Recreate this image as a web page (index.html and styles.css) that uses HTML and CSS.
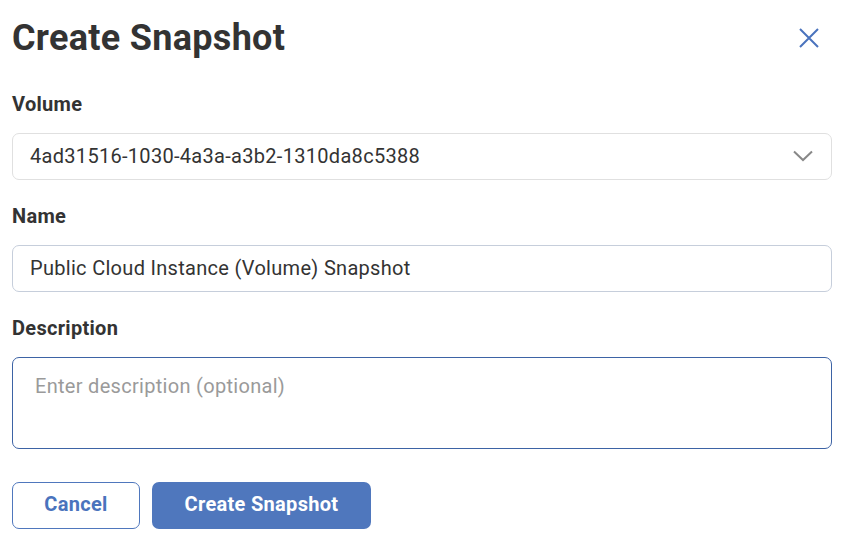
FILE: index.html
```html
<!DOCTYPE html>
<html lang="en">
<head>
    <meta charset="UTF-8">
    <meta name="viewport" content="width=device-width, initial-scale=1.0">
    <title>Create Snapshot</title>
    <link rel="stylesheet" href="styles.css">
</head>
<body>
    <div class="dialog">
        <div class="dialog-header">
            <h1>Create Snapshot</h1>
            <button class="close-btn" aria-label="Close">
                <svg width="20" height="20" viewBox="0 0 20 20">
                    <path d="M1 1 L19 19 M19 1 L1 19" stroke="#4a73bd" stroke-width="2" fill="none"/>
                </svg>
            </button>
        </div>

        <div class="field">
            <label>Volume</label>
            <div class="select">
                <span>4ad31516-1030-4a3a-a3b2-1310da8c5388</span>
                <svg width="20" height="12" viewBox="0 0 20 12">
                    <path d="M1 1.5 L10 10 L19 1.5" stroke="#888" stroke-width="2" fill="none"/>
                </svg>
            </div>
        </div>

        <div class="field">
            <label>Name</label>
            <input type="text" class="input" value="Public Cloud Instance (Volume) Snapshot">
        </div>

        <div class="field">
            <label>Description</label>
            <textarea class="textarea" placeholder="Enter description (optional)"></textarea>
        </div>

        <div class="actions">
            <button class="btn btn-outline">Cancel</button>
            <button class="btn btn-primary">Create Snapshot</button>
        </div>
    </div>
</body>
</html>
```

FILE: styles.css
```css
body {
    font-family: 'Roboto', 'Liberation Sans', sans-serif;
    background-color: #ffffff;
    color: #333333;
    margin: 0;
    letter-spacing: 0.3px;
}
.dialog {
    padding: 18px 14px 0 12px;
}
.dialog-header {
    display: flex;
    justify-content: space-between;
    align-items: center;
    height: 40px;
}
.dialog-header h1 {
    margin: 0;
    font-size: 36px;
    font-weight: 700;
    color: #333333;
    line-height: 40px;
}
.close-btn {
    background: none;
    border: none;
    padding: 0;
    margin-right: 13px;
    width: 20px;
    height: 20px;
    cursor: pointer;
    display: flex;
}
.field {
    display: flex;
    flex-direction: column;
    gap: 17px;
    margin-top: 34px;
}
.field + .field {
    margin-top: 24px;
}
.field label {
    font-size: 20px;
    font-weight: 700;
    line-height: 24px;
    color: #333333;
}
.select, .input, .textarea {
    box-sizing: border-box;
    width: 100%;
    border-radius: 7px;
    font-family: inherit;
    font-size: 20px;
    letter-spacing: 0.3px;
    color: #333333;
    background: #ffffff;
}
.select {
    height: 47px;
    border: 1px solid #e0e0e0;
    display: flex;
    justify-content: space-between;
    align-items: center;
    padding: 0 18px 1px 17px;
}
.input {
    height: 47px;
    border: 1px solid #c6cedb;
    padding: 0 17px 1px;
    outline: none;
}
.textarea {
    height: 92px;
    border: 1px solid #3d63a5;
    padding: 16px 22px;
    resize: none;
    outline: none;
    line-height: 24px;
}
.textarea::placeholder {
    color: #9a9a9a;
}
.actions {
    display: flex;
    gap: 12px;
    margin-top: 33px;
}
.btn {
    height: 47px;
    border-radius: 7px;
    font-family: inherit;
    font-size: 20px;
    font-weight: 700;
    letter-spacing: 0.3px;
    padding: 0 0 3px;
    cursor: pointer;
}
.btn-outline {
    width: 128px;
    background: #ffffff;
    color: #4a73bd;
    border: 1px solid #4f77bd;
}
.btn-primary {
    width: 219px;
    background: #4f77bd;
    color: #ffffff;
    border: none;
}
```
